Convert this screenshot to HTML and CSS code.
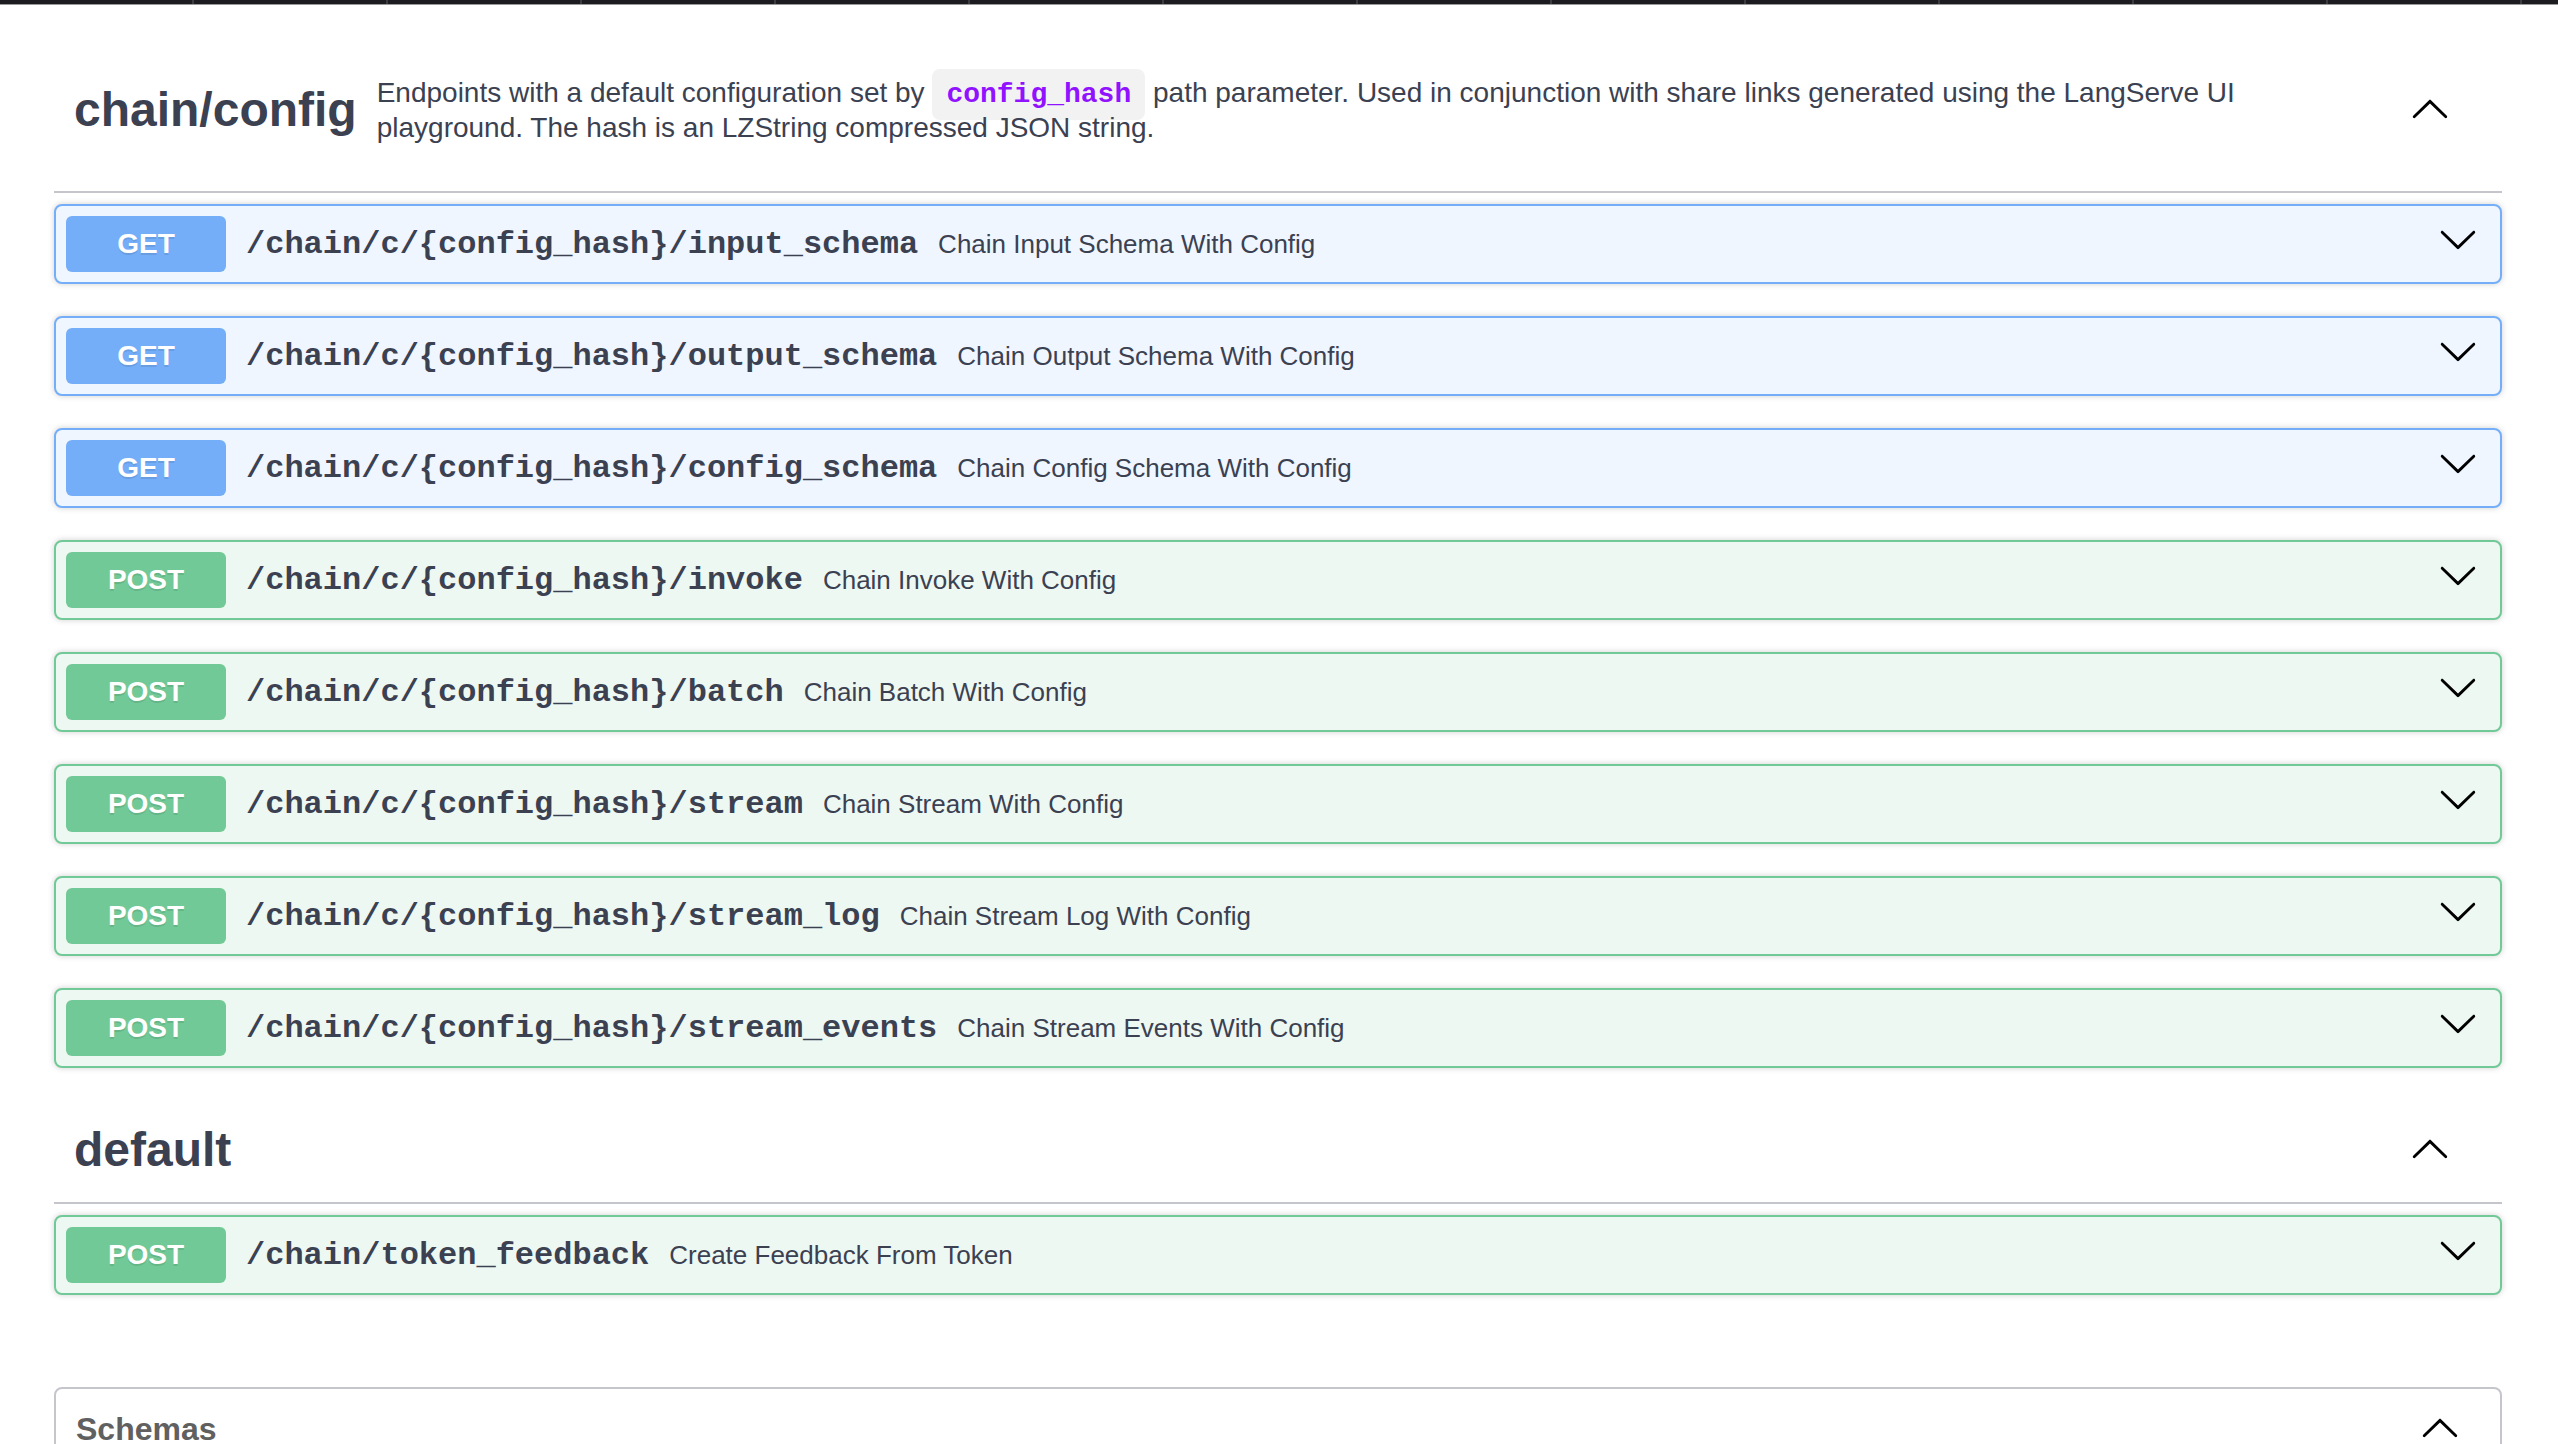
FILE: index.html
```html
<!DOCTYPE html>
<html lang="en">
<head>
<meta charset="utf-8">
<title>LangServe API</title>
<link rel="stylesheet" href="styles.css">
</head>
<body>
<div class="topbar">
  <span></span><span></span><span></span><span></span><span></span><span></span><span></span>
  <span></span><span></span><span></span><span></span><span></span><span></span><span></span>
</div>
<div class="wrapper">
  <section class="tag-section first">
    <div class="tag-header">
      <h3>chain/config</h3>
      <div class="tag-desc">
        <p>Endpoints with a default configuration set by <code>config_hash</code> path parameter. Used in conjunction with share links generated using the LangServe UI playground. The hash is an LZString compressed JSON string.</p>
      </div>
      <svg class="arrow up" viewBox="0 0 20 20" width="40" height="40"><path d="M17.418 6.109c.272-.268.709-.268.979 0s.271.701 0 .969l-7.908 7.83c-.27.268-.707.268-.979 0l-7.908-7.830c-.27-.268-.27-.701 0-.969.271-.268.709-.268.979 0L10 13.25l7.418-7.141z"/></svg>
    </div>

    <div class="opblock get">
      <span class="method">GET</span>
      <span class="path">/chain/c/{config_hash}/input_schema</span>
      <span class="desc">Chain Input Schema With Config</span>
      <svg class="arrow" viewBox="0 0 20 20" width="40" height="40"><path d="M17.418 6.109c.272-.268.709-.268.979 0s.271.701 0 .969l-7.908 7.83c-.27.268-.707.268-.979 0l-7.908-7.83c-.27-.268-.27-.701 0-.969.271-.268.709-.268.979 0L10 13.25l7.418-7.141z"/></svg>
    </div>
    <div class="opblock get">
      <span class="method">GET</span>
      <span class="path">/chain/c/{config_hash}/output_schema</span>
      <span class="desc">Chain Output Schema With Config</span>
      <svg class="arrow" viewBox="0 0 20 20" width="40" height="40"><path d="M17.418 6.109c.272-.268.709-.268.979 0s.271.701 0 .969l-7.908 7.83c-.27.268-.707.268-.979 0l-7.908-7.83c-.27-.268-.27-.701 0-.969.271-.268.709-.268.979 0L10 13.25l7.418-7.141z"/></svg>
    </div>
    <div class="opblock get">
      <span class="method">GET</span>
      <span class="path">/chain/c/{config_hash}/config_schema</span>
      <span class="desc">Chain Config Schema With Config</span>
      <svg class="arrow" viewBox="0 0 20 20" width="40" height="40"><path d="M17.418 6.109c.272-.268.709-.268.979 0s.271.701 0 .969l-7.908 7.83c-.27.268-.707.268-.979 0l-7.908-7.83c-.27-.268-.27-.701 0-.969.271-.268.709-.268.979 0L10 13.25l7.418-7.141z"/></svg>
    </div>
    <div class="opblock post">
      <span class="method">POST</span>
      <span class="path">/chain/c/{config_hash}/invoke</span>
      <span class="desc">Chain Invoke With Config</span>
      <svg class="arrow" viewBox="0 0 20 20" width="40" height="40"><path d="M17.418 6.109c.272-.268.709-.268.979 0s.271.701 0 .969l-7.908 7.83c-.27.268-.707.268-.979 0l-7.908-7.83c-.27-.268-.27-.701 0-.969.271-.268.709-.268.979 0L10 13.25l7.418-7.141z"/></svg>
    </div>
    <div class="opblock post">
      <span class="method">POST</span>
      <span class="path">/chain/c/{config_hash}/batch</span>
      <span class="desc">Chain Batch With Config</span>
      <svg class="arrow" viewBox="0 0 20 20" width="40" height="40"><path d="M17.418 6.109c.272-.268.709-.268.979 0s.271.701 0 .969l-7.908 7.83c-.27.268-.707.268-.979 0l-7.908-7.83c-.27-.268-.27-.701 0-.969.271-.268.709-.268.979 0L10 13.25l7.418-7.141z"/></svg>
    </div>
    <div class="opblock post">
      <span class="method">POST</span>
      <span class="path">/chain/c/{config_hash}/stream</span>
      <span class="desc">Chain Stream With Config</span>
      <svg class="arrow" viewBox="0 0 20 20" width="40" height="40"><path d="M17.418 6.109c.272-.268.709-.268.979 0s.271.701 0 .969l-7.908 7.83c-.27.268-.707.268-.979 0l-7.908-7.83c-.27-.268-.27-.701 0-.969.271-.268.709-.268.979 0L10 13.25l7.418-7.141z"/></svg>
    </div>
    <div class="opblock post">
      <span class="method">POST</span>
      <span class="path">/chain/c/{config_hash}/stream_log</span>
      <span class="desc">Chain Stream Log With Config</span>
      <svg class="arrow" viewBox="0 0 20 20" width="40" height="40"><path d="M17.418 6.109c.272-.268.709-.268.979 0s.271.701 0 .969l-7.908 7.83c-.27.268-.707.268-.979 0l-7.908-7.83c-.27-.268-.27-.701 0-.969.271-.268.709-.268.979 0L10 13.25l7.418-7.141z"/></svg>
    </div>
    <div class="opblock post">
      <span class="method">POST</span>
      <span class="path">/chain/c/{config_hash}/stream_events</span>
      <span class="desc">Chain Stream Events With Config</span>
      <svg class="arrow" viewBox="0 0 20 20" width="40" height="40"><path d="M17.418 6.109c.272-.268.709-.268.979 0s.271.701 0 .969l-7.908 7.83c-.27.268-.707.268-.979 0l-7.908-7.83c-.27-.268-.27-.701 0-.969.271-.268.709-.268.979 0L10 13.25l7.418-7.141z"/></svg>
    </div>
  </section>

  <section class="tag-section">
    <div class="tag-header">
      <h3>default</h3>
      <div class="tag-desc"></div>
      <svg class="arrow up" viewBox="0 0 20 20" width="40" height="40"><path d="M17.418 6.109c.272-.268.709-.268.979 0s.271.701 0 .969l-7.908 7.83c-.27.268-.707.268-.979 0l-7.908-7.83c-.27-.268-.27-.701 0-.969.271-.268.709-.268.979 0L10 13.25l7.418-7.141z"/></svg>
    </div>
    <div class="opblock post">
      <span class="method">POST</span>
      <span class="path">/chain/token_feedback</span>
      <span class="desc">Create Feedback From Token</span>
      <svg class="arrow" viewBox="0 0 20 20" width="40" height="40"><path d="M17.418 6.109c.272-.268.709-.268.979 0s.271.701 0 .969l-7.908 7.83c-.27.268-.707.268-.979 0l-7.908-7.83c-.27-.268-.27-.701 0-.969.271-.268.709-.268.979 0L10 13.25l7.418-7.141z"/></svg>
    </div>
  </section>

  <section class="models">
    <div class="models-header">
      <h4>Schemas</h4>
      <svg class="arrow up" viewBox="0 0 20 20" width="40" height="40"><path d="M17.418 6.109c.272-.268.709-.268.979 0s.271.701 0 .969l-7.908 7.83c-.27.268-.707.268-.979 0l-7.908-7.83c-.27-.268-.27-.701 0-.969.271-.268.709-.268.979 0L10 13.25l7.418-7.141z"/></svg>
    </div>
    <div class="models-body"></div>
  </section>
</div>
</body>
</html>
```

FILE: styles.css
```css
html, body {
  margin: 0;
  padding: 0;
  background: #ffffff;
}

body {
  font-family: "Liberation Sans", Arial, sans-serif;
  color: #3b4151;
}

.topbar {
  display: flex;
  height: 4px;
  background: #1c1b20;
  border-bottom: 1px solid #9a9a9a;
  overflow: hidden;
}

.topbar span {
  flex: none;
  width: 192px;
  border-right: 2px solid #3c3b41;
}

.wrapper {
  margin: 0 56px 0 54px;
}

.tag-section.first {
  margin-top: 23px;
}

.tag-header {
  display: flex;
  align-items: center;
  padding: 20px 52px 22px 20px;
  border-bottom: 2px solid #c4c6cb;
  margin-bottom: 11px;
}

.tag-section.first .tag-header {
  padding-bottom: 19px;
}

.tag-header h3 {
  margin: 0;
  font-size: 48px;
  line-height: 60px;
  font-weight: bold;
  color: #3b4151;
  white-space: nowrap;
}

.tag-desc {
  flex: 1;
  margin-left: 20px;
  font-size: 28px;
  color: #3b4151;
}

.tag-desc p {
  margin: 28px 0;
  line-height: 33px;
  max-width: 1900px;
}

.tag-desc code {
  font-family: "Liberation Mono", "Courier New", monospace;
  font-weight: bold;
  font-size: 28px;
  color: #9012fe;
  background: #f2f2f2;
  padding: 10px 14px;
  border-radius: 8px;
}

.arrow {
  flex: none;
  fill: #000000;
}

.arrow.up {
  transform: rotate(180deg);
}

.opblock {
  display: flex;
  align-items: center;
  height: 80px;
  box-sizing: border-box;
  padding: 10px;
  margin-bottom: 32px;
  border: 2px solid;
  border-radius: 8px;
  box-shadow: 0 0 6px rgba(0, 0, 0, 0.19);
}

.opblock.get {
  background: #eff6ff;
  border-color: #74aef9;
}

.opblock.post {
  background: #eef8f3;
  border-color: #70c996;
}

.method {
  flex: none;
  width: 160px;
  height: 56px;
  line-height: 56px;
  text-align: center;
  border-radius: 6px;
  font-family: "Liberation Sans", Arial, sans-serif;
  font-weight: bold;
  font-size: 28px;
  color: #ffffff;
  text-shadow: 0 2px 0 rgba(0, 0, 0, 0.1);
}

.get .method {
  background: #74aef9;
}

.post .method {
  background: #70c996;
}

.path {
  margin-left: 20px;
  font-family: "Liberation Mono", "Courier New", monospace;
  font-weight: bold;
  font-size: 32px;
  color: #3b4151;
  white-space: nowrap;
}

.desc {
  flex: 1;
  margin-left: 20px;
  font-size: 26px;
  color: #3b4151;
  white-space: nowrap;
}

.opblock .arrow {
  margin-right: 12px;
  margin-bottom: 10px;
}

.models {
  margin-top: 92px;
  border: 2px solid #c4c6cb;
  border-radius: 8px;
}

.models-header {
  display: flex;
  align-items: center;
  padding: 20px 40px 20px 20px;
}

.models-header h4 {
  flex: 1;
  margin: 0;
  font-size: 32px;
  line-height: 37px;
  font-weight: bold;
  color: #606060;
}

.models-body {
  height: 200px;
}
```
